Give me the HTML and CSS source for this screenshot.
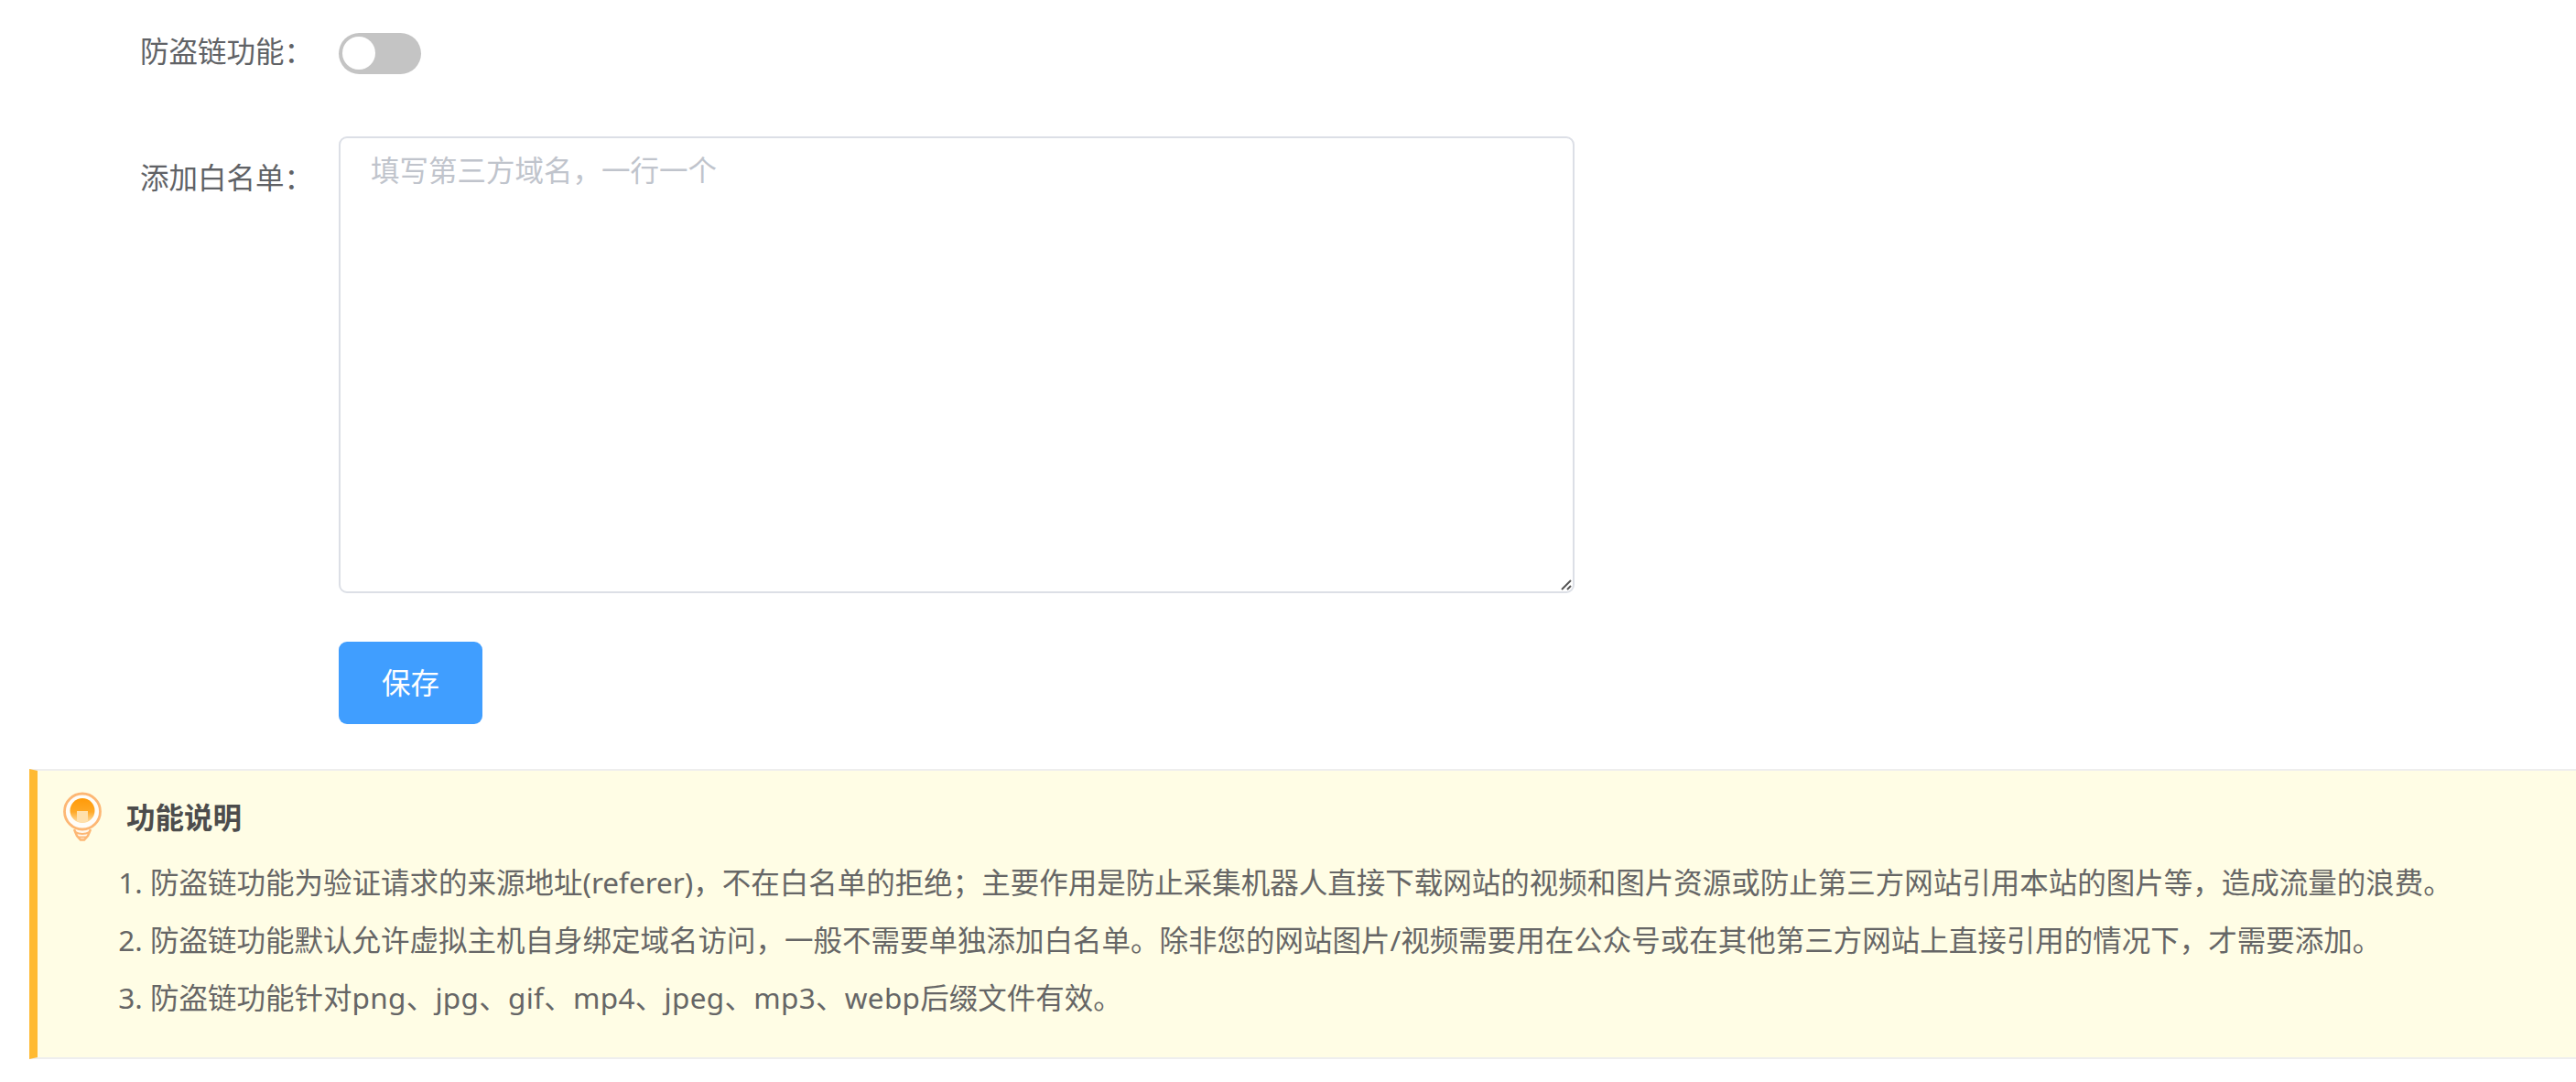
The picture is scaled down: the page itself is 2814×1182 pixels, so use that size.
FILE: index.html
```
<!DOCTYPE html>
<html lang="zh-CN">
	<head>
		<meta charset="UTF-8"/>
		<title>防盗链</title>
		<link rel="stylesheet" href="styles.css">
	</head>
	<body>
		<div class="form">
			<div class="row row-switch">
				<label class="label">防盗链功能：</label>
				<span class="switch"><i class="knob"></i></span>
			</div>
			<div class="row row-list">
				<label class="label" for="whitelist">添加白名单：</label>
				<div class="field">
					<textarea class="whitelist" id="whitelist" placeholder="填写第三方域名，一行一个"></textarea>
					<svg class="grip" viewBox="0 0 12 12">
						<path d="M1 11L11 1M7 11L11 7" fill="none" stroke="#555" stroke-width="2"/>
					</svg>
				</div>
			</div>
			<div class="row row-save">
				<button class="save" type="button">保存</button>
			</div>
		</div>
		<div class="notice">
			<div class="notice-title">
				<svg class="bulb" viewBox="0 0 44 54">
					<defs>
						<linearGradient id="glow" x1="0" y1="0" x2="0" y2="1">
							<stop offset="0" stop-color="#ff9a08"/>
							<stop offset=".55" stop-color="#ffa927"/>
							<stop offset="1" stop-color="#ffdfa8"/>
						</linearGradient>
					</defs>
					<path d="M13 41l3 7 4 4.500h4l4-4.500 3-7" fill="#fffaf0" stroke="#fdb774" stroke-width="2.500"/>
					<path d="M14 44q8 4 16 0M18 49.500h8" fill="none" stroke="#fdb774" stroke-width="2"/>
					<circle cx="22" cy="21.500" r="19.500" fill="#fffdf8" stroke="#fdb774" stroke-width="2.800"/>
					<circle cx="22" cy="20.500" r="13.500" fill="url(#glow)"/>
					<path d="M16 21h12v11q-6 3-12 0z" fill="#ffe0ac"/>
				</svg>
				<h3>功能说明</h3>
			</div>
			<ol class="notice-list">
				<li>防盗链功能为验证请求的来源地址(referer)，不在白名单的拒绝；主要作用是防止采集机器人直接下载网站的视频和图片资源或防止第三方网站引用本站的图片等，造成流量的浪费。</li>
				<li>防盗链功能默认允许虚拟主机自身绑定域名访问，一般不需要单独添加白名单。除非您的网站图片/视频需要用在公众号或在其他第三方网站上直接引用的情况下，才需要添加。</li>
				<li>防盗链功能针对<span class="types">png、jpg、gif、mp4、jpeg、mp3、webp</span>后缀文件有效。</li>
			</ol>
		</div>
	</body>
</html>
```
FILE: styles.css
```
* {
	box-sizing: border-box;
	margin: 0;
	padding: 0;
}
body {
	background: #fff;
	color: #606266;
	font: 31.5px/63px "Noto Sans", "Noto Sans CJK SC", sans-serif;
	overflow: hidden;
}
.form {
	padding-top: 36px;
}
.row {
	display: flex;
	align-items: flex-start;
}
.label {
	width: 370px;
	padding-right: 28px;
	text-align: right;
	white-space: nowrap;
}
.row-switch {
	height: 113px;
}
.row-switch .label {
	margin-top: -12px;
}
.switch {
	width: 90px;
	height: 45px;
	padding: 4px;
	border-radius: 23px;
	background: #c4c4c4;
}
.knob {
	display: block;
	width: 36px;
	height: 36px;
	border-radius: 50%;
	background: #fff;
}
.row-list .label {
	padding-top: 13px;
}
.field {
	position: relative;
	height: 499px;
}
.whitelist {
	display: block;
	width: 1350px;
	height: 499px;
	padding: 12px 33px;
	border: 2px solid #dcdfe6;
	border-radius: 9px;
	background: #fff;
	color: #606266;
	font: inherit;
	line-height: 46px;
	resize: none;
}
.whitelist::placeholder {
	color: #c0c4cc;
}
/* resize handle in the corner of the textarea */
.grip {
	position: absolute;
	right: 3px;
	bottom: 3px;
	width: 12px;
	height: 12px;
}
.row-save {
	padding: 53px 0 49px 370px;
}
.save {
	width: 157px;
	height: 90px;
	border: 0;
	border-radius: 9px;
	background: #409eff;
	color: #fff;
	font: inherit;
	line-height: 90px;
}
.notice {
	height: 317px;
	margin-left: 32px;
	padding: 21px 0 0 25px;
	border: 2px solid #eee;
	border-left: 9px solid #ffba32;
	border-right: 0;
	background: #fffde5;
}
.notice-title {
	display: flex;
	align-items: flex-start;
	height: 69px;
}
.bulb {
	width: 44px;
	height: 54px;
	margin: 2px 26px 0 2px;
}
.notice-title h3 {
	margin-top: -2px;
	color: #4c4c4c;
	font-size: 31.5px;
	line-height: 63px;
}
.notice-list {
	padding-left: 98px;
	color: #666;
	white-space: nowrap;
}
.types {
	letter-spacing: .3px;
}
```
